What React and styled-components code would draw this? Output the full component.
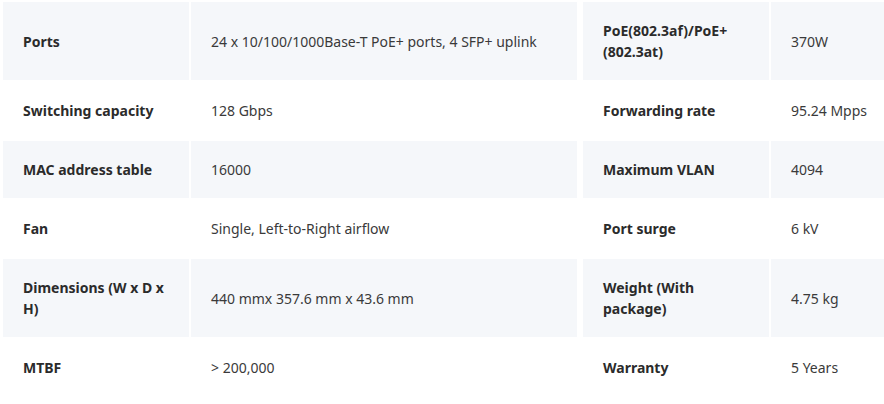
import React from "react";
import styled, { createGlobalStyle } from "styled-components";

const GlobalStyle = createGlobalStyle`
  body {
    margin: 0;
    background: #ffffff;
    font-family: "Noto Sans", "Open Sans", sans-serif;
    overflow: hidden;
  }
`;

const SpecTable = styled.div`
  display: flex;
  flex-direction: column;
  gap: 2px;
  width: 900px;
  padding: 2px 0 0 3px;
`;

const Row = styled.div`
  display: flex;
  gap: 6px;
`;

const Pair = styled.div`
  display: grid;
  grid-template-columns: 186px 1fr;
  gap: 2px;
  flex: ${props => (props.$wide ? "0 0 574px" : "1 1 auto")};
`;

const Cell = styled.div`
  display: flex;
  align-items: center;
  padding: 18px 20px;
  font-size: 14px;
  line-height: 21px;
  background: ${props => (props.$shaded ? "#f5f7fa" : "#ffffff")};
`;

const Label = styled(Cell)`
  font-weight: 700;
  color: #2b2b2b;
`;

const Value = styled(Cell)`
  font-weight: 400;
  color: #3a3a3a;
  white-space: nowrap;
`;

const specs = [
  [
    ["Ports", "24 x 10/100/1000Base-T PoE+ ports, 4 SFP+ uplink"],
    ["PoE(802.3af)/PoE+ (802.3at)", "370W"],
  ],
  [
    ["Switching capacity", "128 Gbps"],
    ["Forwarding rate", "95.24 Mpps"],
  ],
  [
    ["MAC address table", "16000"],
    ["Maximum VLAN", "4094"],
  ],
  [
    ["Fan", "Single, Left-to-Right airflow"],
    ["Port surge", "6 kV"],
  ],
  [
    ["Dimensions (W x D x H)", "440 mmx 357.6 mm x 43.6 mm"],
    ["Weight (With package)", "4.75 kg"],
  ],
  [
    ["MTBF", "> 200,000"],
    ["Warranty", "5 Years"],
  ],
];

export default function App() {
  return (
    <>
      <GlobalStyle />
      <SpecTable>
        {specs.map((row, i) => {
          const shaded = i % 2 === 0;
          return (
            <Row key={i}>
              {row.map(([label, value], j) => (
                <Pair key={label} $wide={j === 0}>
                  <Label $shaded={shaded}>{label}</Label>
                  <Value $shaded={shaded}>{value}</Value>
                </Pair>
              ))}
            </Row>
          );
        })}
      </SpecTable>
    </>
  );
}
